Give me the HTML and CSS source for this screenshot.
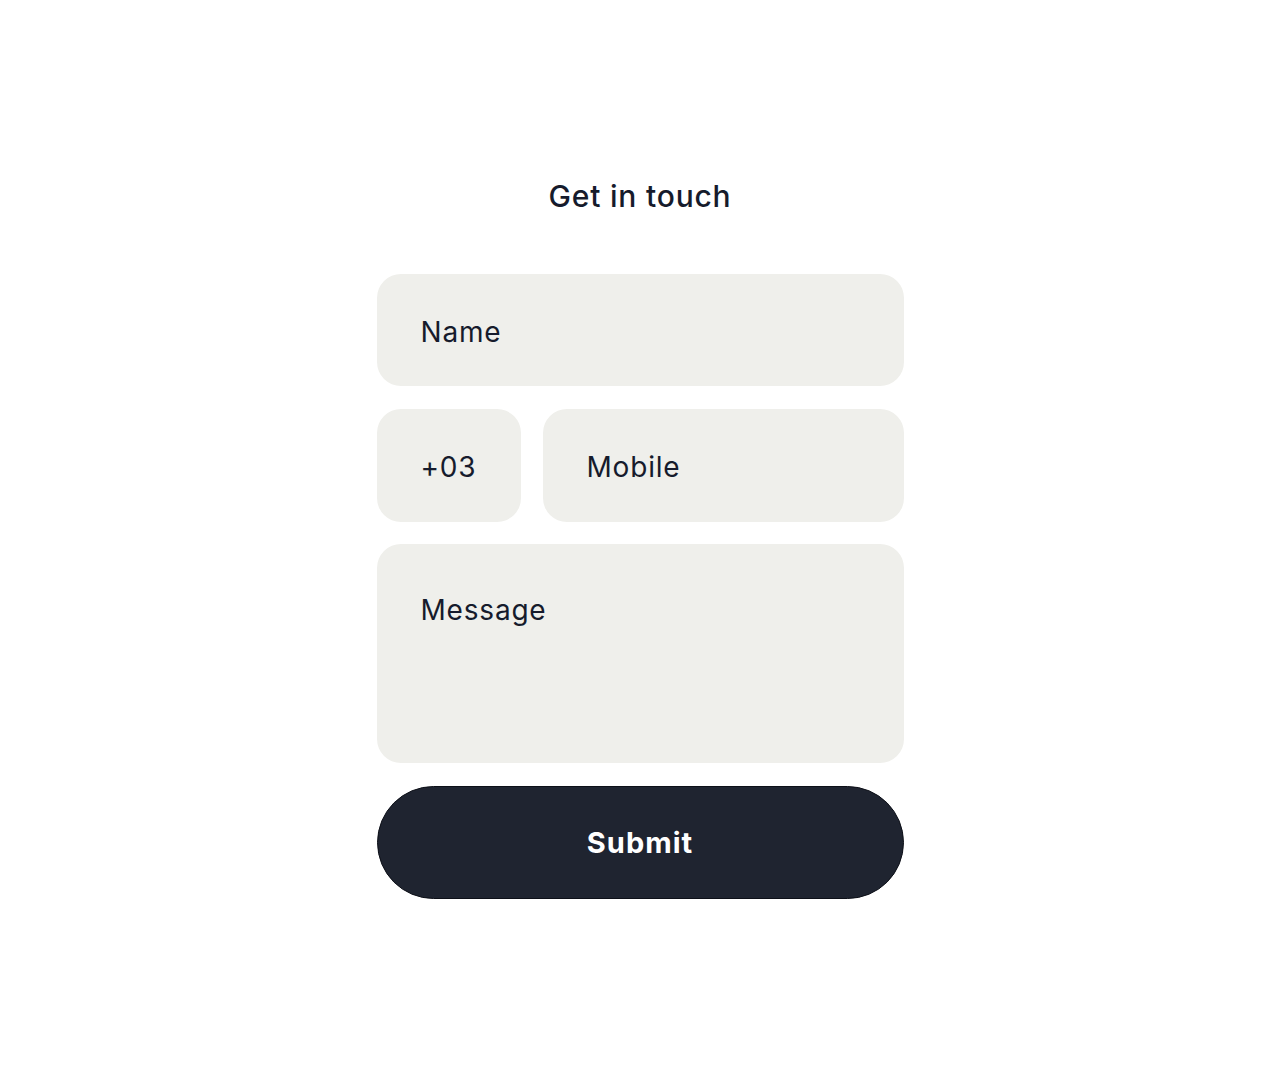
FILE: index.html
```html
<!DOCTYPE html>
<html lang="en">
<head>
<meta charset="utf-8">
<title>Get in touch</title>
<link rel="stylesheet" href="styles.css">
</head>
<body>
<main class="page">
  <section class="contact">
    <h1 class="title">Get in touch</h1>
    <form class="form">
      <input class="field field-name" type="text" placeholder="Name">
      <div class="row">
        <input class="field field-code" type="text" placeholder="+03">
        <input class="field field-mobile" type="text" placeholder="Mobile">
      </div>
      <textarea class="field field-message" placeholder="Message"></textarea>
      <button class="submit" type="button">Submit</button>
    </form>
  </section>
</main>
</body>
</html>
```

FILE: styles.css
```css
* { box-sizing: border-box; }
html, body { margin: 0; padding: 0; background: #ffffff; }
body {
  font-family: Inter, "Noto Sans", "Liberation Sans", sans-serif;
  color: #161b2c;
}
.page {
  display: flex;
  justify-content: center;
  padding-top: 178px;
}
.contact {
  width: 527px;
  display: flex;
  flex-direction: column;
  align-items: center;
}
.title {
  margin: 0;
  font-size: 30px;
  line-height: 36px;
  font-weight: 500;
  letter-spacing: 0.8px;
  color: #161b2c;
}
.form {
  margin-top: 60px;
  width: 100%;
  display: flex;
  flex-direction: column;
  gap: 22.5px;
}
.row {
  display: flex;
  gap: 22px;
}
.field {
  display: block;
  border: none;
  outline: none;
  background: #efefeb;
  border-radius: 24px;
  font-family: inherit;
  font-size: 28px;
  line-height: 34px;
  letter-spacing: 0.8px;
  color: #161b2c;
  padding: 4px 43px 0 44px;
  margin: 0;
}
.field::placeholder { color: #161b2c; opacity: 1; }
.field-name { width: 100%; height: 112px; }
.field-code { width: 144px; height: 113px; }
.field-mobile { flex: 1; min-width: 0; height: 113px; }
.field-message {
  width: 100%;
  height: 219px;
  resize: none;
  padding-top: 49px;
}
.submit {
  width: 100%;
  height: 113px;
  border: 1px solid #0d1018;
  border-radius: 57px;
  background: #1f2430;
  color: #ffffff;
  font-family: inherit;
  font-size: 29px;
  font-weight: 700;
  letter-spacing: 1px;
  padding-top: 2px;
  cursor: pointer;
}
```
